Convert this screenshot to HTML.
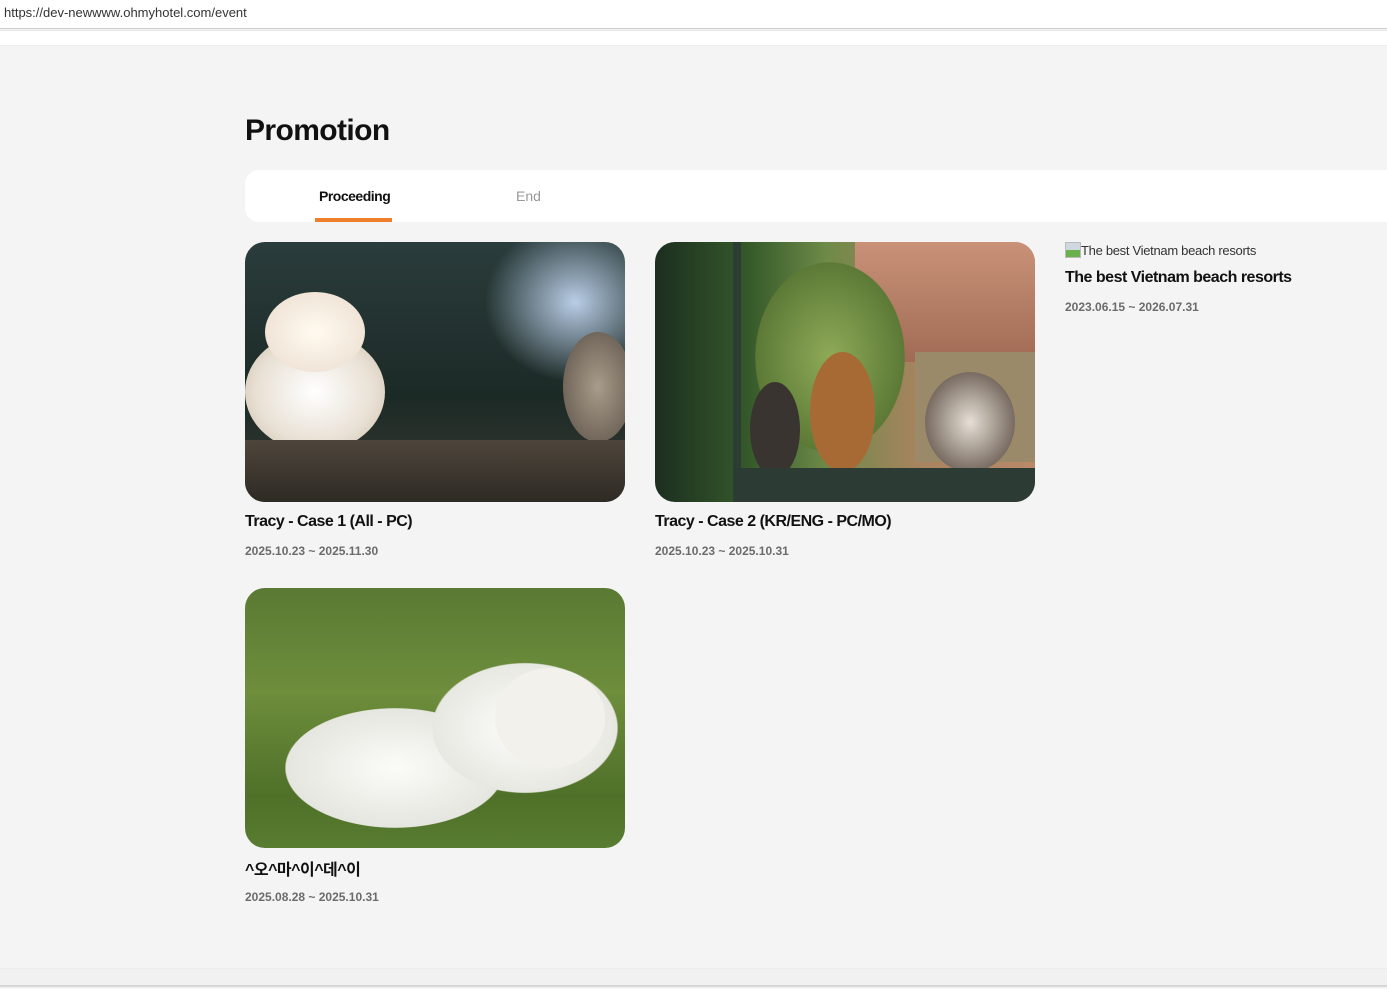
<!DOCTYPE html>
<html><head><meta charset="utf-8"><style>
*{margin:0;padding:0;box-sizing:border-box}
body{width:1387px;height:989px;background:#f4f4f4;font-family:"Liberation Sans","Noto Sans CJK KR",sans-serif;position:relative;overflow:hidden}
.url{position:absolute;left:0;top:0;width:1387px;height:29px;background:#fff;border-bottom:1px solid #cfcfcf;font-size:13px;color:#333;padding:5px 0 0 4px}
.strip{position:absolute;left:0;top:30px;width:1387px;height:16px;background:#fff;border-top:1px solid #e6e6e6;border-bottom:1px solid #ececec}
h1{position:absolute;left:245px;top:114px;font-size:30px;font-weight:bold;color:#111;letter-spacing:-0.6px}
.tabs{position:absolute;left:245px;top:170px;width:1150px;height:52px;background:#fff;border-radius:14px 0 0 14px}
.t1{position:absolute;left:74px;top:18px;font-size:14px;font-weight:bold;color:#111;letter-spacing:-0.5px}
.bar{position:absolute;left:70px;top:48px;width:77px;height:4px;background:#f07f2b}
.t2{position:absolute;left:271px;top:18px;font-size:14px;color:#999}
.img{position:absolute;width:380px;height:260px;border-radius:20px;overflow:hidden}
.ti{position:absolute;font-size:16px;font-weight:bold;color:#111;letter-spacing:-0.5px}
.d{position:absolute;font-size:12px;font-weight:bold;color:#6b6b6b}
.e{position:absolute;border-radius:50%}
.foot{position:absolute;left:0;top:968px;width:1387px;height:19px;background:#f1f1f1;border-top:1px solid #ececec;border-bottom:2px solid #d6d6d6}
</style></head><body>
<div class="url">https://dev-newwww.ohmyhotel.com/event</div>
<div class="strip"></div>
<h1>Promotion</h1>
<div class="tabs"><div class="t1">Proceeding</div><div class="bar"></div><div class="t2">End</div></div>

<div class="img" style="left:245px;top:242px;background:radial-gradient(ellipse 90px 80px at 330px 60px,#b9cde6,transparent),linear-gradient(#2a3c3c,#1c2a26 60%,#3a3a34)">
 <div class="e" style="left:0;top:90px;width:140px;height:120px;background:radial-gradient(#fff,#e8e0d4 60%,#c8b8a0)"></div>
 <div class="e" style="left:20px;top:50px;width:100px;height:80px;background:radial-gradient(#fffaf0,#eadccd)"></div>
 <div class="e" style="left:318px;top:90px;width:70px;height:110px;background:radial-gradient(#a89c8a,#5a5046)"></div>
 <div style="position:absolute;left:0;top:198px;width:380px;height:62px;background:linear-gradient(#4e463c,#2e2a24)"></div>
</div>
<div class="ti" style="left:245px;top:513px">Tracy - Case 1 (All - PC)</div>
<div class="d" style="left:245px;top:544px">2025.10.23 ~ 2025.11.30</div>

<div class="img" style="left:655px;top:242px;background:linear-gradient(90deg,#1c2e20 0,#365a2a 25%,#6d8a48 45%,#a9835f 70%,#b98a6a 100%)">
 <div style="position:absolute;left:200px;top:0;width:180px;height:120px;background:linear-gradient(#c99278,#a06a54)"></div>
 <div style="position:absolute;left:260px;top:110px;width:120px;height:110px;background:#9a8a6a"></div>
 <div class="e" style="left:100px;top:20px;width:150px;height:190px;background:radial-gradient(#8eaa58,#5c7a36 70%,transparent 71%)"></div>
 <div class="e" style="left:95px;top:140px;width:50px;height:95px;background:#3a3430"></div>
 <div class="e" style="left:155px;top:110px;width:65px;height:120px;background:#a86a34"></div>
 <div class="e" style="left:270px;top:130px;width:90px;height:100px;background:radial-gradient(#e6e0d6,#4a3a30)"></div>
 <div style="position:absolute;left:78px;top:0;width:8px;height:260px;background:#2c3e34"></div>
 <div style="position:absolute;left:80px;top:226px;width:300px;height:34px;background:#2c3c34"></div>
</div>
<div class="ti" style="left:655px;top:513px">Tracy - Case 2 (KR/ENG - PC/MO)</div>
<div class="d" style="left:655px;top:544px">2025.10.23 ~ 2025.10.31</div>

<div style="position:absolute;left:1065px;top:242px;font-size:13px;color:#333;letter-spacing:-0.3px"><span style="display:inline-block;width:16px;height:16px;vertical-align:-3px;background:linear-gradient(#cfd8e0 50%,#6ab04c 50%);border:1px solid #bbb"></span>The best Vietnam beach resorts</div>
<div class="ti" style="left:1065px;top:269px">The best Vietnam beach resorts</div>
<div class="d" style="left:1065px;top:300px">2023.06.15 ~ 2026.07.31</div>

<div class="img" style="left:245px;top:588px;background:linear-gradient(#5a7a34,#6e8e3c 40%,#4e7028 80%,#587c30)">
 <div class="e" style="left:40px;top:120px;width:220px;height:120px;background:radial-gradient(#fbfbf8,#e6e6e0 70%,transparent 71%)"></div>
 <div class="e" style="left:180px;top:70px;width:200px;height:140px;background:radial-gradient(#fdfdfb,#e8e8e2 65%,transparent 66%)"></div>
 <div class="e" style="left:250px;top:80px;width:110px;height:100px;background:#f3f1ec"></div>
</div>
<div class="ti" style="left:245px;top:856px">^오^마^이^데^이</div>
<div class="d" style="left:245px;top:890px">2025.08.28 ~ 2025.10.31</div>
<div class="foot"></div>
</body></html>
